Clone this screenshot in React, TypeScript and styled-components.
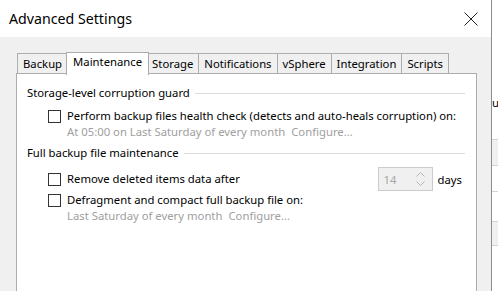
import React from "react";
import styled, { createGlobalStyle } from "styled-components";

const Global = createGlobalStyle`
  html, body { margin: 0; padding: 0; }
  body { font-family: "Noto Sans", "Open Sans", sans-serif; font-size: 11.3px; color: #000; }
`;

const Screen = styled.div`
  width: 498px;
  height: 291px;
  display: flex;
  overflow: hidden;
  background: #fff;
`;

const Dialog = styled.div`
  box-sizing: border-box;
  width: 492px;
  display: flex;
  flex-direction: column;
  border-right: 1px solid #8c8c8c;
  flex-shrink: 0;
`;

const TitleBar = styled.div`
  height: 37px;
  background: #fff;
  display: flex;
  align-items: center;
  justify-content: space-between;
  padding: 0 13px 0 9px;
`;

const Title = styled.div`
  font-size: 14.2px;
  padding-bottom: 1px;
`;

const CloseButton = styled.div`
  width: 14px;
  height: 14px;
  display: flex;
`;

const Body = styled.div`
  flex: 1;
  min-width: 0;
  background: #f0f0f0;
  padding: 15px 14px 0 16px;
  display: flex;
  flex-direction: column;
`;

const TabStrip = styled.div`
  display: flex;
  align-items: flex-end;
  padding-left: 1px;
  height: 22px;
  position: relative;
  z-index: 1;
`;

const Tab = styled.div<{ $active?: boolean }>`
  box-sizing: border-box;
  height: ${(p) => (p.$active ? 23 : 21)}px;
  padding: ${(p) => (p.$active ? "1px 6px 0" : "2px 5px 0")};
  margin: ${(p) => (p.$active ? "0 -2px -1px" : "0")};
  border: 1px solid #adadad;
  border-left-width: ${(p) => (p.$active ? 1 : 0)}px;
  border-bottom: ${(p) => (p.$active ? "none" : "1px solid #adadad")};
  background: ${(p) => (p.$active ? "#fff" : "#f0f0f0")};
  position: relative;
  z-index: ${(p) => (p.$active ? 2 : 1)};
  line-height: 16px;
  white-space: nowrap;
  &:first-child { border-left-width: 1px; }
`;

const Panel = styled.div`
  flex: 1;
  min-width: 0;
  background: #fff;
  border: 1px solid #adadad;
  border-bottom: none;
  margin-top: -1px;
  padding: 11px 11px 0 10px;
  display: flex;
  flex-direction: column;
`;

const GroupHeader = styled.div<{ $gap: number }>`
  display: flex;
  align-items: center;
  line-height: 16px;
  margin-top: ${(p) => p.$gap}px;
  &::after {
    content: "";
    flex: 1;
    height: 1px;
    background: #dcdcdc;
    margin-left: 5px;
    margin-top: 1px;
  }
`;

const Row = styled.div<{ $gap?: number; $h?: number }>`
  display: flex;
  align-items: center;
  padding-left: 21px;
  height: ${(p) => p.$h ?? 16}px;
  margin-top: ${(p) => p.$gap ?? 0}px;
`;

const Box = styled.span`
  width: 13px;
  height: 13px;
  box-sizing: border-box;
  border: 1px solid #333;
  background: #fff;
  margin-right: 6px;
  flex-shrink: 0;
`;

const Label = styled.span`
  line-height: 16px;
  white-space: nowrap;
`;

const SubText = styled.div`
  padding-left: 40px;
  line-height: 16px;
  color: #a0a0a0;
  white-space: nowrap;
`;

const Link = styled.span`
  margin-left: 6px;
`;

const SpinGroup = styled.div`
  margin-left: auto;
  margin-right: 3px;
  display: flex;
  align-items: center;
`;

const Spin = styled.div`
  box-sizing: border-box;
  width: 55px;
  height: 24px;
  border: 1px solid #cccccc;
  background: #f0f0f0;
  display: flex;
  align-items: center;
  padding-left: 5px;
  color: #a6a6a6;
`;

const SpinValue = styled.span`
  flex: 1;
`;

const SpinArrows = styled.div`
  width: 22px;
  display: flex;
  flex-direction: column;
  align-items: center;
  gap: 4px;
`;

const Unit = styled.span`
  margin-left: 5px;
`;

const Backdrop = styled.div`
  flex: 1;
  display: flex;
  flex-direction: column;
  background: #fff;
  overflow: hidden;
`;

const BackdropBar = styled.div`
  height: 4px;
  background: #217346;
`;

const BackdropText = styled.div`
  margin-top: 95px;
  line-height: 16px;
  white-space: nowrap;
`;

const BackdropBand = styled.div<{ $h: number; $bg: string }>`
  height: ${(p) => p.$h}px;
  background: ${(p) => p.$bg};
  border-bottom: 1px solid #d4d4d4;
  flex-shrink: 0;
`;

const tabs = ["Backup", "Maintenance", "Storage", "Notifications", "vSphere", "Integration", "Scripts"];

const Chevron = ({ up }: { up?: boolean }) => (
  <svg width="9" height="5" viewBox="0 0 9 5">
    <path d={up ? "M0.5 4.5 L4.5 0.5 L8.5 4.5" : "M0.5 0.5 L4.5 4.5 L8.5 0.5"} fill="none" stroke="#b4b4b4" strokeWidth="1" />
  </svg>
);

export default function App() {
  return (
    <>
      <Global />
      <Screen>
        <Dialog>
          <TitleBar>
            <Title>Advanced Settings</Title>
            <CloseButton>
              <svg width="14" height="14" viewBox="0 0 14 14">
                <path d="M0.5 0.5 L13.5 13.5 M13.5 0.5 L0.5 13.5" stroke="#222" strokeWidth="1" />
              </svg>
            </CloseButton>
          </TitleBar>
          <Body>
            <TabStrip>
              {tabs.map((t) => (
                <Tab key={t} $active={t === "Maintenance"}>{t}</Tab>
              ))}
            </TabStrip>
            <Panel>
              <GroupHeader $gap={0}>Storage-level corruption guard</GroupHeader>
              <Row $gap={7}>
                <Box />
                <Label>Perform backup files health check (detects and auto-heals corruption) on:</Label>
              </Row>
              <SubText>
                At 05:00 on Last Saturday of every month<Link>Configure...</Link>
              </SubText>
              <GroupHeader $gap={5}>Full backup file maintenance</GroupHeader>
              <Row $gap={6} $h={24}>
                <Box />
                <Label>Remove deleted items data after</Label>
                <SpinGroup>
                  <Spin>
                    <SpinValue>14</SpinValue>
                    <SpinArrows>
                      <Chevron up />
                      <Chevron />
                    </SpinArrows>
                  </Spin>
                  <Unit>days</Unit>
                </SpinGroup>
              </Row>
              <Row $gap={1}>
                <Box />
                <Label>Defragment and compact full backup file on:</Label>
              </Row>
              <SubText>
                Last Saturday of every month<Link>Configure...</Link>
              </SubText>
            </Panel>
          </Body>
        </Dialog>
        <Backdrop>
          <BackdropBar />
          <BackdropText>u</BackdropText>
          <BackdropBand $h={28} $bg="#fff" />
          <BackdropBand $h={25} $bg="#f0f0f0" />
          <BackdropBand $h={25} $bg="#fff" />
          <BackdropBand $h={29} $bg="#fff" />
          <BackdropBand $h={23} $bg="#f0f0f0" />
          <BackdropBand $h={60} $bg="#fff" />
        </Backdrop>
      </Screen>
    </>
  );
}
